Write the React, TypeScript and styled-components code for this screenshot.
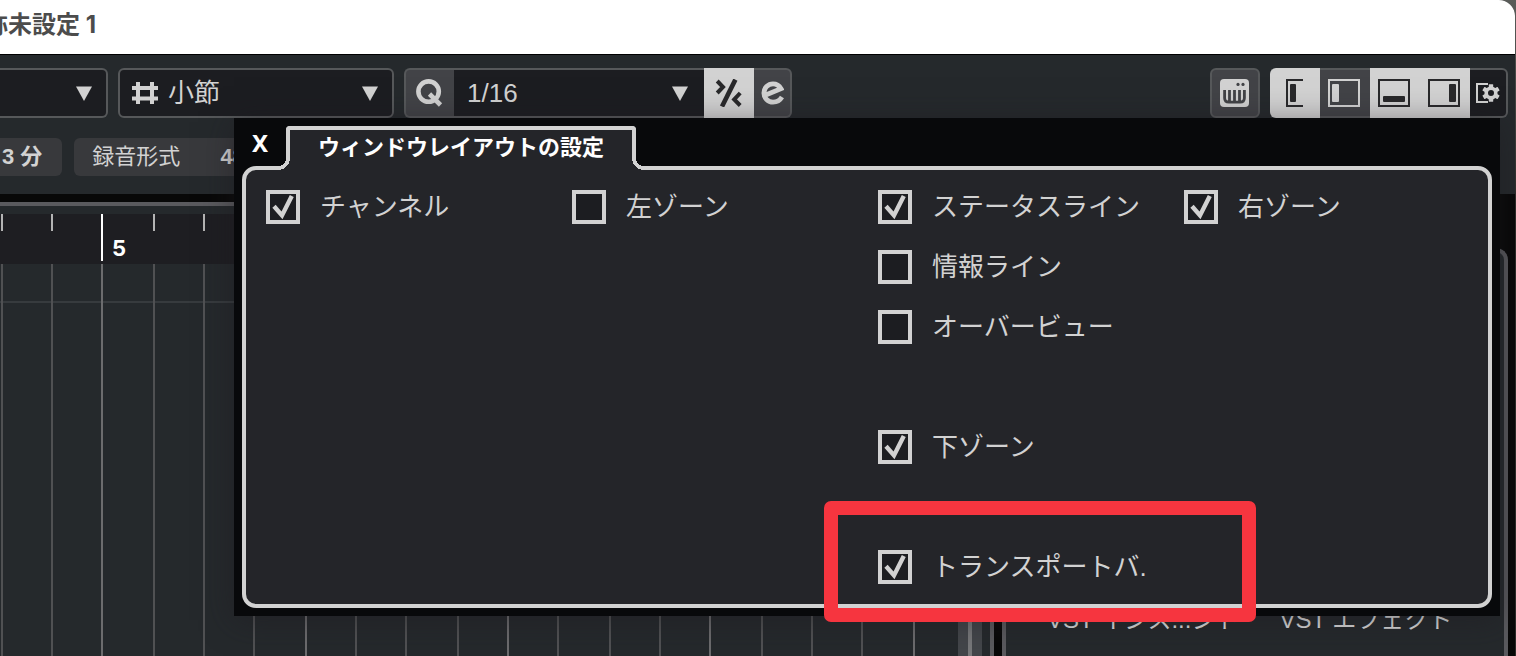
import React, { useState } from "react";
import styled, { createGlobalStyle, css } from "styled-components";

const color = {
  light: "#d2d2d2",
  line: "#56585a",
  well: "#1c1d21",
  button: "#424347",
  bar: "#25292c",
  panel: "#242529",
  dark: "#08090b",
  frame: "#5a5a5e",
};

const GlobalStyle = createGlobalStyle`
  * { box-sizing: border-box; }
  body {
    margin: 0;
    background: linear-gradient(#5a5c59, #2c2b28 200px);
    font-family: "Liberation Sans", "Noto Sans CJK JP", sans-serif;
    color: ${color.light};
  }
  button, select, input { font: inherit; color: inherit; margin: 0; }
`;

const Window = styled.div`
  position: relative;
  display: flex;
  flex-direction: column;
  min-height: 100vh;
  margin-right: 1px;
  border-radius: 0 16px 0 0;
  overflow: hidden;
  background: #080808;
`;

const TitleBar = styled.header`
  height: 55px;
  margin: 0;
  padding-top: 7px;
  background: #fff;
  border-bottom: 1px solid #000;
`;

const DocumentTitle = styled.h1`
  margin: 0 0 0 -16px;
  font-family: Inter, "Noto Sans CJK JP", sans-serif;
  font-size: 24px;
  line-height: 36px;
  font-weight: 700;
  color: #4c4c4c;
  white-space: nowrap;
`;

const Toolbar = styled.div`
  display: flex;
  gap: 10px;
  padding: 13px 7px 20px 0;
  background: ${color.bar};
`;

const Spacer = styled.div`
  flex: 1;
`;

const Picker = styled.label<{ $width: number; $cutLeft?: boolean }>`
  display: flex;
  align-items: center;
  gap: 10px;
  flex: 0 0 ${(p) => p.$width}px;
  height: 50px;
  padding: 0 14px 0 12px;
  border: 2px solid ${color.line};
  border-left-width: ${(p) => (p.$cutLeft ? 0 : 2)}px;
  border-radius: ${(p) => (p.$cutLeft ? "0 6px 6px 0" : "6px")};
  background: ${color.well};
`;

const PickerSelect = styled.select`
  flex: 1;
  min-width: 0;
  height: 46px;
  padding: 0;
  appearance: none;
  border: 0;
  background: transparent;
  font-size: 26px;
`;

const Segments = styled.div`
  display: flex;
`;

const segment = css`
  display: flex;
  align-items: center;
  justify-content: center;
  height: 50px;
  border: 2px solid ${color.line};
  border-width: 2px 0;
  &:first-child {
    border-left-width: 2px;
    border-radius: 6px 0 0 6px;
  }
  &:last-child {
    border-right-width: 2px;
    border-radius: 0 6px 6px 0;
  }
  &:only-child {
    border-radius: 6px;
  }
`;

type Tone = "on" | "off" | "well";

const toneFill: Record<Tone, string> = {
  on: color.light,
  off: color.button,
  well: color.well,
};

const SegmentButton = styled.button<{ $tone: Tone; $width?: number }>`
  ${segment}
  width: ${(p) => p.$width ?? 50}px;
  padding: 0;
  color: ${(p) => (p.$tone === "on" ? "#29292b" : color.light)};
  background: ${(p) => toneFill[p.$tone]};
  ${(p) => p.$tone === "on" && `border-color: ${color.light};`}
`;

const SegmentPicker = styled.label`
  ${segment}
  width: 250px;
  padding: 0 16px 0 13px;
  background: ${color.well};
`;

const InfoLine = styled.div`
  display: flex;
  gap: 12px;
  padding-bottom: 18px;
  background: ${color.bar};
`;

const InfoChip = styled.div<{ $cutLeft?: boolean }>`
  display: flex;
  gap: 40px;
  height: 38px;
  padding: 0 ${(p) => (p.$cutLeft ? 20 : 18)}px 0 ${(p) => (p.$cutLeft ? 2 : 18)}px;
  border-radius: ${(p) => (p.$cutLeft ? "0 6px 6px 0" : "6px")};
  background: #38393c;
  font-size: 22px;
  line-height: 38px;
  white-space: nowrap;
`;

const Workspace = styled.main`
  display: flex;
  flex: 1;
  gap: 8px;
  padding: 8px 7px 0 0;
`;

const ProjectZone = styled.section`
  display: flex;
  flex-direction: column;
  flex: 0 0 994px;
  min-width: 0;
  padding-top: 8px;
  border: solid ${color.frame};
  border-width: 4px 4px 0 0;
  background: ${color.bar};
`;

const ProjectBody = styled.div`
  display: flex;
  flex: 1;
`;

const Timeline = styled.div`
  display: flex;
  flex-direction: column;
  flex: 1;
  min-width: 0;
  overflow: hidden;
`;

const Ruler = styled.div`
  display: flex;
  height: 50px;
  padding-left: 1px;
  background: #1e1e22;
`;

const RulerBeat = styled.div<{ $width: number; $bar: boolean }>`
  flex: 0 0 ${(p) => p.$width}px;
  height: ${(p) => (p.$bar ? 47 : 17)}px;
  padding: ${(p) => (p.$bar ? "22px 0 0 9px" : "0")};
  border-left: 2px solid ${(p) => (p.$bar ? "#fff" : "#b4b4b4")};
  font-family: Inter, sans-serif;
  font-size: 22px;
  line-height: 25px;
  font-weight: 700;
  color: #fff;
`;

const Grid = styled.div`
  display: flex;
  flex: 1;
  padding-left: 1px;
  background: linear-gradient(#373b3e, #373b3e) 0 37px / 100% 2px no-repeat;
`;

const GridBeat = styled.div<{ $width: number; $bar: boolean }>`
  flex: 0 0 ${(p) => p.$width}px;
  border-left: 2px solid ${(p) => (p.$bar ? "#6c6c6e" : "#505153")};
`;

const ScrollTrack = styled.div`
  display: flex;
  justify-content: center;
  width: 24px;
  margin-right: 8px;
  background: #43464a;
`;

const ScrollThumb = styled.div`
  width: 4px;
  background: #77787a;
`;

const RightZone = styled.aside`
  flex: 1;
  min-width: 0;
  margin-top: 46px;
  border: 4px solid ${color.frame};
  border-bottom: 0;
  border-radius: 12px 12px 0 0;
  background: ${color.bar};
`;

const RackList = styled.div`
  height: 352px;
`;

const RackTabs = styled.nav`
  display: flex;
  gap: 40px;
  padding-left: 41px;
`;

const RackTab = styled.a`
  font-size: 24px;
  line-height: 32px;
  color: #dedede;
  text-decoration: none;
  white-space: nowrap;
`;

const Popup = styled.section`
  position: absolute;
  top: 118px;
  right: 15px;
  left: 234px;
  padding: 8px;
  background: ${color.dark};
  box-shadow: 0 4px 30px rgba(30, 26, 32, 0.5);
`;

const PopupHeader = styled.header`
  display: flex;
  align-items: flex-start;
`;

const CloseButton = styled.button`
  width: 36px;
  height: 34px;
  margin-right: 8px;
  padding: 0;
  border: 0;
  background: transparent;
  font-family: "Noto Sans", sans-serif;
  font-size: 24px;
  line-height: 34px;
  font-weight: 700;
  color: #fff;
`;

const fillet = css`
  content: "";
  position: absolute;
  bottom: 0;
  width: 12px;
  height: 12px;
`;

const PopupTab = styled.h2`
  position: relative;
  z-index: 1;
  width: 350px;
  height: 44px;
  margin: 0 0 -4px;
  padding-left: 28px;
  border: 4px solid ${color.light};
  border-bottom: 0;
  border-radius: 4px 4px 0 0;
  background: ${color.panel};
  font-size: 22px;
  line-height: 36px;
  font-weight: 700;
  color: #fff;
  white-space: nowrap;
  &::before {
    ${fillet}
    left: -12px;
    background: radial-gradient(circle at 0 0, ${color.dark} 8px, ${color.light} 8px 12px, ${color.panel} 12px);
  }
  &::after {
    ${fillet}
    right: -12px;
    background: radial-gradient(circle at 100% 0, ${color.dark} 8px, ${color.light} 8px 12px, ${color.panel} 12px);
  }
`;

const OptionGrid = styled.div`
  display: grid;
  grid-template-columns: repeat(3, 306px) 1fr;
  grid-auto-rows: 34px;
  row-gap: 26px;
  padding: 20px 0 20px 20px;
  border: 4px solid ${color.light};
  border-radius: 14px;
  background: ${color.panel};
`;

const Option = styled.label<{ $column: number; $row: number }>`
  grid-column: ${(p) => p.$column};
  grid-row: ${(p) => p.$row};
  display: flex;
  align-items: center;
  gap: 20px;
  font-size: 26px;
  line-height: 34px;
  white-space: nowrap;
`;

const BoxFrame = styled.span`
  display: grid;
  width: 34px;
  height: 34px;
  > * {
    grid-area: 1 / 1;
  }
  svg {
    pointer-events: none;
    z-index: 1;
  }
`;

const BoxInput = styled.input`
  width: 34px;
  height: 34px;
  appearance: none;
  border: 4px solid ${color.light};
  background: ${color.well};
`;

const Highlight = styled.div`
  position: absolute;
  z-index: 2;
  top: 383px;
  left: 590px;
  width: 432px;
  height: 121px;
  border: 14px solid #f6353f;
  border-radius: 7px;
  pointer-events: none;
`;

const HashIcon = () => (
  <svg width="26" height="22" viewBox="0 0 26 22" fill="none" stroke="currentColor" strokeWidth="4" aria-hidden>
    <path d="M6 0V22M20 0V22M0 6H26M0 16.5H26" />
  </svg>
);

const DownArrow = () => (
  <svg width="16" height="15" viewBox="0 0 16 15" fill="currentColor" aria-hidden>
    <path d="M0 0.5H16L8 15Z" />
  </svg>
);

const QuantizeIcon = () => (
  <svg width="28" height="30" viewBox="0 0 28 30" fill="none" stroke="currentColor" strokeWidth="4.6" aria-hidden>
    <circle cx="12.6" cy="13.6" r="10.2" />
    <path d="M13.5 16L24.5 27" />
  </svg>
);

const IterativeIcon = () => (
  <svg width="28" height="28" viewBox="0 0 28 28" fill="none" stroke="currentColor" strokeWidth="4.6" aria-hidden>
    <path d="M20.4 0.6L7 27.5" />
    <path d="M2.2 2L8 8L2.2 14M25.2 14L19.2 20.5L25.2 26.5" strokeWidth="4" />
  </svg>
);

const EditIcon = () => (
  <svg width="24" height="24" viewBox="-1 0 24 24" fill="none" stroke="currentColor" strokeWidth="4.8" aria-hidden>
    <path d="M3.5 14.5L20 7.6C18 4.2 15.2 2.9 12 2.9A9.1 9.1 0 1 0 12 21.1C15.5 21.1 19 19.5 21 16" />
  </svg>
);

const KeyboardIcon = () => (
  <svg width="30" height="28" viewBox="0 0 30 28" aria-hidden>
    <rect width="29" height="28" rx="4" fill="currentColor" />
    <g fill="none" stroke={color.button} strokeWidth="2.8">
      <path d="M4.6 11V19Q4.6 23.2 9 23.2H20Q24.4 23.2 24.4 19V11M9.5 11V23M14.5 11V23M19.5 11V23" />
    </g>
    <circle cx="18" cy="5.4" r="1.6" fill={color.button} />
    <circle cx="23" cy="5.4" r="1.6" fill={color.button} />
  </svg>
);

const ChannelZoneIcon = () => (
  <svg width="20" height="28" viewBox="0 0 20 28" aria-hidden>
    <path d="M17 1H1V27H17" fill="none" stroke="currentColor" strokeWidth="2" />
    <rect x="4" y="5" width="6" height="18" rx="1" fill="currentColor" />
  </svg>
);

type BarBox = { x: number; y: number; w: number; h: number };

const ZoneIcon = ({ x, y, w, h }: BarBox) => (
  <svg width="34" height="28" viewBox="0 0 34 28" aria-hidden>
    <rect x="1" y="1" width="30" height="26" fill="none" stroke="currentColor" strokeWidth="2" />
    <rect x={x} y={y} width={w} height={h} rx="1" fill="currentColor" />
  </svg>
);

const SetupIcon = () => {
  const teeth = [0, 60, 120, 180, 240, 300];
  return (
    <svg width="24" height="20" viewBox="0 0 24 20" aria-hidden>
      <path d="M12 1H1V19H12" fill="none" stroke="currentColor" strokeWidth="2" />
      <circle cx="15" cy="10" r="8.4" fill={color.well} />
      <g fill="currentColor">
        {teeth.map((angle) => (
          <rect key={angle} x="12.8" y="1.2" width="4.4" height="5" rx="0.6" transform={`rotate(${angle} 15 10)`} />
        ))}
      </g>
      <circle cx="15" cy="10" r="4.8" fill="none" stroke="currentColor" strokeWidth="3.6" />
    </svg>
  );
};

const CheckMark = () => (
  <svg width="34" height="34" viewBox="0 0 34 34" fill="none" stroke={color.light} strokeWidth="4.4" aria-hidden>
    <path d="M8 16.2L16 25.4L25.8 6" />
  </svg>
);

const beatWidths = [50, 50, 52, 50, 50, 52, 50, 50, 52, 50, 50, 52, 50, 50, 52, 50, 50, 52, 50];
const beats = beatWidths.map((width, i) => ({ width, bar: i % 4 === 2, label: i === 2 ? "5" : "" }));

const options = [
  { id: "channel", text: "チャンネル", column: 1, row: 1, on: true },
  { id: "left", text: "左ゾーン", column: 2, row: 1, on: false },
  { id: "status", text: "ステータスライン", column: 3, row: 1, on: true },
  { id: "info", text: "情報ライン", column: 3, row: 2, on: false },
  { id: "overview", text: "オーバービュー", column: 3, row: 3, on: false },
  { id: "lower", text: "下ゾーン", column: 3, row: 5, on: true },
  { id: "transport", text: "トランスポートバ.", column: 3, row: 7, on: true },
  { id: "right", text: "右ゾーン", column: 4, row: 1, on: true },
];

export default function App() {
  const [checked, setChecked] = useState<Record<string, boolean>>(() =>
    Object.fromEntries(options.map((o) => [o.id, o.on])),
  );
  const toggle = (id: string) => setChecked((c) => ({ ...c, [id]: !c[id] }));

  return (
    <>
      <GlobalStyle />
      <Window>
        <TitleBar>
          <DocumentTitle>称未設定 1</DocumentTitle>
        </TitleBar>

        <Toolbar>
          <Picker $width={108} $cutLeft>
            <PickerSelect aria-label="スナップ">
              <option></option>
            </PickerSelect>
            <DownArrow />
          </Picker>
          <Picker $width={276}>
            <HashIcon />
            <PickerSelect aria-label="グリッド">
              <option>小節</option>
            </PickerSelect>
            <DownArrow />
          </Picker>
          <Segments>
            <SegmentButton $tone="off" aria-label="クオンタイズ">
              <QuantizeIcon />
            </SegmentButton>
            <SegmentPicker>
              <PickerSelect aria-label="クオンタイズ値">
                <option>1/16</option>
              </PickerSelect>
              <DownArrow />
            </SegmentPicker>
            <SegmentButton $tone="on" aria-label="反復">
              <IterativeIcon />
            </SegmentButton>
            <SegmentButton $tone="off" $width={38} aria-label="編集">
              <EditIcon />
            </SegmentButton>
          </Segments>
          <Spacer />
          <Segments>
            <SegmentButton $tone="off" aria-label="キーボード">
              <KeyboardIcon />
            </SegmentButton>
          </Segments>
          <Segments>
            <SegmentButton $tone="on" aria-label="チャンネル">
              <ChannelZoneIcon />
            </SegmentButton>
            <SegmentButton $tone="off" aria-label="左ゾーン">
              <ZoneIcon x={4} y={5} w={7} h={18} />
            </SegmentButton>
            <SegmentButton $tone="on" aria-label="下ゾーン">
              <ZoneIcon x={5} y={17} w={22} h={6} />
            </SegmentButton>
            <SegmentButton $tone="on" aria-label="右ゾーン">
              <ZoneIcon x={21} y={5} w={7} h={18} />
            </SegmentButton>
            <SegmentButton $tone="well" $width={38} aria-label="設定">
              <SetupIcon />
            </SegmentButton>
          </Segments>
        </Toolbar>

        <InfoLine>
          <InfoChip $cutLeft>
            <b>3 分</b>
          </InfoChip>
          <InfoChip>
            <span>録音形式</span>
            <b>48</b>
          </InfoChip>
        </InfoLine>

        <Workspace>
          <ProjectZone>
            <ProjectBody>
              <Timeline>
                <Ruler>
                  {beats.map((b, i) => (
                    <RulerBeat key={i} $width={b.width} $bar={b.bar}>
                      {b.label}
                    </RulerBeat>
                  ))}
                </Ruler>
                <Grid>
                  {beats.map((b, i) => (
                    <GridBeat key={i} $width={b.width} $bar={b.bar} />
                  ))}
                </Grid>
              </Timeline>
              <ScrollTrack>
                <ScrollThumb />
              </ScrollTrack>
            </ProjectBody>
          </ProjectZone>
          <RightZone>
            <RackList />
            <RackTabs>
              <RackTab href="#instruments">VST インス...ント</RackTab>
              <RackTab href="#effects">VST エフェクト</RackTab>
            </RackTabs>
          </RightZone>
        </Workspace>

        <Popup>
          <PopupHeader>
            <CloseButton aria-label="閉じる">X</CloseButton>
            <PopupTab>ウィンドウレイアウトの設定</PopupTab>
          </PopupHeader>
          <OptionGrid>
            {options.map((o) => (
              <Option key={o.id} $column={o.column} $row={o.row}>
                <BoxFrame>
                  <BoxInput type="checkbox" checked={checked[o.id]} onChange={() => toggle(o.id)} />
                  {checked[o.id] && <CheckMark />}
                </BoxFrame>
                <span>{o.text}</span>
              </Option>
            ))}
          </OptionGrid>
          <Highlight />
        </Popup>
      </Window>
    </>
  );
}
